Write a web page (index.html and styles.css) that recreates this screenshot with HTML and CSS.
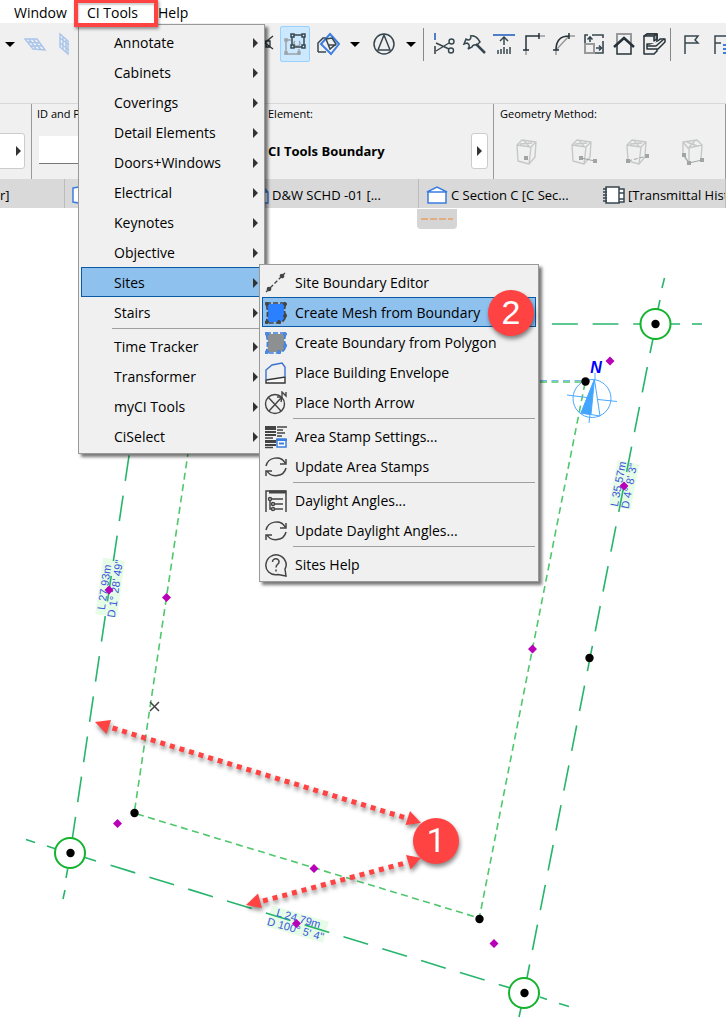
FILE: index.html
```html
<!DOCTYPE html>
<html lang="en">
<head>
<meta charset="utf-8">
<title>CI Tools – Sites</title>
<link rel="stylesheet" href="styles.css">
</head>
<body>
<svg class="defs" aria-hidden="true">
  <defs>
    <g id="cube" fill="none" stroke="#c6c8c8" stroke-width="1.4" stroke-linejoin="round">
      <path d="M2 6 16 8 14 25 3 22ZM2 6 7 1 21 3 16 8M21 3 20 18 14 25M5 5 17 4M9 2l5 5"/>
    </g>
    <g id="refresh" fill="none" stroke="#444" stroke-width="1.5">
      <path d="M2 11C4 2 17 0 21 8M22 4v5h-6M22 13C20 22 7 23 3 16M2 21v-5h6"/>
    </g>
  </defs>
</svg>
<div class="app">
  <nav class="menubar" aria-label="Main menu">
    <button class="menubar-item">Window</button>
    <button class="menubar-item current">CI Tools</button>
    <button class="menubar-item">Help</button>
  </nav>

  <div class="toolbar">
    <div class="tools tools-start">
      <button class="caret" aria-label="Options"></button>
      <button class="tool" aria-label="Plane"><svg width="24" height="20" viewBox="0 0 24 20" fill="none" stroke="#a9c4ea" stroke-width="1.4"><path d="M2 5 14 5 22 16 10 15ZM5 8 16 9M7 12 19 12M6 5l7 10M10 5l8 11"/></svg></button>
      <button class="tool" aria-label="Elevation"><svg width="14" height="24" viewBox="0 0 14 24" fill="none" stroke="#a9c4ea" stroke-width="1.4"><path d="M2 2 10 9 10 22 2 15ZM5 5v12M8 7v13M2 6l9 7M2 11l9 7"/></svg></button>
    </div>
    <div class="tools">
      <button class="tool" aria-label="Cut lines"><svg width="22" height="22" viewBox="0 0 22 22" fill="none" stroke="#263238" stroke-width="1.3"><path d="M3 4l16 12M3 16 19 3M12 8v6h4V8Z"/></svg></button>
      <button class="tool active" aria-label="Suspend groups"><svg width="22" height="22" viewBox="0 0 22 22" fill="none" stroke-width="1.5"><g stroke="#9aa3a8"><path d="M7 7H2v14h13v-5M11 8a3 3 0 1 0 4 0"/><path fill="#9aa3a8" d="M1 6h2v2H1ZM1 19h2v2H1ZM14 19h2v2h-2Z"/></g><g stroke="#37474f"><path d="M8 2h12v12H8Z"/><path fill="#cce8ff" d="M7 1h3v3H7ZM18 1h3v3h-3ZM7 12h3v3H7ZM18 12h3v3h-3Z"/></g></svg></button>
      <button class="tool" aria-label="Trim to roof"><svg width="24" height="24" viewBox="0 0 24 24" fill="none" stroke="#37474f" stroke-width="1.5"><path d="M2 20V11L7 6h5M2 20h8"/><path stroke="#3b7ee0" stroke-width="2" fill="#f0f0f0" d="M14 2 23 12 15 22 5 12Z"/><path d="M10 7 16 6 20 12 14 17ZM12 13h8"/></svg></button>
      <button class="caret" aria-label="Roof options"></button>
      <button class="tool" aria-label="Magic wand"><svg width="24" height="24" viewBox="0 0 24 24" fill="none" stroke="#37474f" stroke-width="1.5"><circle cx="12" cy="12" r="10"/><path d="M12 3 6 18H18Z"/></svg></button>
      <button class="caret" aria-label="Wand options"></button>
    </div>
    <div class="tools divided">
      <button class="tool" aria-label="Split"><svg width="22" height="24" viewBox="0 0 22 24" fill="none" stroke="#37474f" stroke-width="1.4"><path stroke="#4f7fc8" stroke-width="2" d="M2 1v7"/><path stroke="#666" stroke-width="2" d="M2 14v8"/><path d="M3 11 16 17M3 19 16 11"/><circle cx="18.500" cy="9.500" r="2.500"/><circle cx="18" cy="18.500" r="2.500"/></svg></button>
      <button class="tool" aria-label="Adjust"><svg width="24" height="24" viewBox="0 0 24 24" fill="none" stroke="#37474f" stroke-width="1.5"><path d="M8 4q5-1 8 3l2 3-3 3q-4-1-5 2l-4 2q3-4-1-6l-3 1 2-5 2 1q3 0 3-4Z"/><path stroke-width="2.500" d="M14 12 23 21"/></svg></button>
      <button class="tool" aria-label="Elevate"><svg width="22" height="24" viewBox="0 0 22 24" fill="none" stroke="#37474f" stroke-width="1.5"><path stroke="#4f7fc8" stroke-width="2" d="M0 3h22"/><path d="M11 13V5M7 9l4-4 4 4M5 18v4M8 17v5M11 15v7M14 17v5M17 15v7"/></svg></button>
      <button class="tool" aria-label="Intersect"><svg width="24" height="24" viewBox="0 0 24 24" fill="none" stroke="#263238" stroke-width="1.5"><path stroke="#999" d="M16 4h7M4 17v6"/><path d="M4 18V4H17M17 1v6M1 18h6"/></svg></button>
      <button class="tool" aria-label="Fillet"><svg width="24" height="24" viewBox="0 0 24 24" fill="none" stroke="#263238" stroke-width="1.5"><path stroke="#999" d="M16 4h7M4 17v6M4 18 17 4"/><path d="M4 18Q4 4 17 4M17 1v6M1 18h6"/></svg></button>
      <button class="tool" aria-label="Resize"><svg width="22" height="24" viewBox="0 0 22 24" fill="none" stroke="#37474f" stroke-width="1.6"><path d="M2 11V3h3M9 3H20V6M20 9V21H12"/><path stroke="#999" stroke-width="2" d="M2 12h9v9H2Z"/><path d="M7 10V5M4.500 7.500 7 5l2.500 2.500M13 16h5M16 13.500l2.500 2.500-2.500 2.500"/></svg></button>
      <button class="tool" aria-label="Roof trim"><svg width="22" height="24" viewBox="0 0 22 24" fill="none"><path stroke="#999" stroke-width="2" d="M4 11V2h14v9"/><path stroke="#263238" stroke-width="1.500" d="M4 13v9h14v-9"/><path stroke="#263238" stroke-width="2.500" d="M1 15 11 6l10 9"/></svg></button>
      <button class="tool" aria-label="Solid operations"><svg width="24" height="24" viewBox="0 0 24 24" fill="#f0f0f0" stroke="#263238" stroke-width="1.5" stroke-linejoin="round"><path d="M2 4v18h10l3-3V2H5Z"/><path fill="#9aa3a8" d="M2 4h10l3-2H5ZM12 4v5l3-2V2Z"/><path d="M5 12h8l5-5h5v3l-7 7H5Z"/><path d="M5 14h9l8-7"/></svg></button>
    </div>
    <div class="tools divided">
      <button class="tool" aria-label="Flag"><svg width="18" height="24" viewBox="0 0 18 24" fill="none" stroke="#37474f" stroke-width="1.5"><path d="M3 22V4H16l-3 4 3 3H3"/></svg></button>
      <button class="tool" aria-label="Flag list"><svg width="18" height="24" viewBox="0 0 18 24" fill="none" stroke="#37474f" stroke-width="1.5"><path d="M3 22V4H15M3 11h6"/><path stroke="#3b7ee0" stroke-width="2" d="M11 13h7M11 17h7M11 21h7"/></svg></button>
    </div>
  </div>

  <div class="infobox">
    <section class="info info-start"><button class="expand" aria-label="More"></button></section>
    <section class="info info-id">
      <label class="info-label" for="element-id">ID and Property:</label>
      <input id="element-id" type="text">
    </section>
    <section class="info info-element">
      <h2 class="info-label">Element:</h2>
      <div class="info-row"><strong>CI Tools Boundary</strong><button class="expand" aria-label="More"></button></div>
    </section>
    <section class="info info-geometry">
      <h2 class="info-label">Geometry Method:</h2>
      <div class="methods">
        <button class="method" aria-label="Point"><svg width="26" height="28" viewBox="0 0 26 28"><use href="#cube"/><path fill="#a0a4a5" d="M9 17h4v4H9Z"/></svg></button>
        <button class="method" aria-label="Two points"><svg width="28" height="28" viewBox="0 0 28 28"><use href="#cube"/><path stroke="#a0a4a5" d="M11 19 25 22"/><path fill="#a0a4a5" d="M9 17h4v4H9ZM23 20h4v4h-4Z"/></svg></button>
        <button class="method" aria-label="Diagonal"><svg width="26" height="28" viewBox="0 0 26 28"><use href="#cube"/><path stroke="#a0a4a5" stroke-dasharray="4 2" d="M3 22 22 17"/><path fill="#a0a4a5" d="M1 20h4v4H1ZM20 15h4v4h-4Z"/></svg></button>
        <button class="method" aria-label="Three points"><svg width="26" height="28" viewBox="0 0 26 28"><g fill="none" stroke="#c6c8c8" stroke-width="1.400" stroke-linejoin="round"><path d="M3 3 17 1 22 6 8 9ZM3 3v13l6 8V9M22 6l-1 14M7 3l10 4M15 2 9 8"/></g><path fill="none" stroke="#a0a4a5" d="M4 16 9 24 22 21"/><path fill="#a0a4a5" d="M2 14h4v4H2ZM7 22h4v4H7ZM20 19h4v4h-4Z"/></svg></button>
      </div>
    </section>
  </div>

  <div class="tabs" role="tablist">
    <button class="tab tab-start" role="tab">r]</button>
    <button class="tab" role="tab"><svg width="20" height="20" viewBox="0 0 20 20" fill="#fff" stroke="#3b7ee0" stroke-width="1.500"><path d="M1 3 7 2V18L1 17ZM7 2h12v16H7"/></svg></button>
    <button class="tab" role="tab"><svg width="20" height="20" viewBox="0 0 20 20" fill="#fff" stroke="#3b7ee0" stroke-width="1.500"><path d="M2 2h12l5 5v11H2ZM14 2v5h5"/></svg><span>D&amp;W SCHD -01 [...</span></button>
    <button class="tab tab-open" role="tab"><svg width="22" height="20" viewBox="0 0 22 20" fill="#fff" stroke="#3b7ee0" stroke-width="1.500"><path d="M2 7h18v11H2ZM1 7 11 2l10 5Z"/></svg><span>C Section C [C Sec...</span></button>
    <button class="tab" role="tab"><svg width="22" height="20" viewBox="0 0 22 20" fill="#fff" stroke="#37474f" stroke-width="1.500"><path d="M3 2h13v16H3ZM16 4h5v13h-5M16 8h5M16 14h5M0 4h4M0 7h4M0 10h4M0 13h4M0 16h4"/></svg><span>[Transmittal Hist</span></button>
  </div>

  <main class="canvas">
    <div class="handle"></div>
    <svg class="plan" viewBox="0 208 726 812">
      <g class="label-bg">
        <rect x="-28" y="-11" width="57" height="22" transform="translate(110 588) rotate(-82)"/>
        <rect x="-23" y="-11" width="46" height="22" transform="translate(624 485) rotate(-79)"/>
        <rect x="-29" y="-11" width="59" height="22" transform="translate(297 924) rotate(16)"/>
      </g>
      <g class="boundary">
        <path class="long" d="M135 415.200 72.400 838"/>
        <path class="long" d="M647.300 367 525 988"/>
        <path class="long" d="M110.600 865.300 512 988.500"/>
        <path class="long" d="M552 324H641"/>
        <path d="M67.700 869 66 878M65 890 63 899M85 857.500 96 861M47 846 56 849M26 839.500 35 842.500M664.500 278 662 288M660 300 658 309M653 339 650 353M671 324h9M692 324h10M540 997 547 999.500M559 1003.500 569 1006.500M521 1008 519 1017"/>
      </g>
      <path class="blue-dash" d="M540 380.500H583"/>
      <g class="setback">
        <path d="M540 382H583"/>
        <path d="M585 383 479.500 917"/>
        <path d="M137 814 479 918"/>
        <path d="M188.500 450 134.500 811"/>
      </g>
      <g class="dims">
        <g transform="translate(110 588) rotate(-82)"><text y="-2">L 27.93m</text><text y="9">D 1° 28' 49"</text></g>
        <g transform="translate(624 485) rotate(-79)"><text y="-2">L 35.57m</text><text y="9">D 4° 8' 3"</text></g>
        <g transform="translate(297 924) rotate(16)"><text y="-2">L 24.79m</text><text y="9">D 100° 5' 4"</text></g>
      </g>
      <g class="north">
        <circle cx="592" cy="398.500" r="19"/>
        <path d="M595 373V380M590 414 589 423M567 395 587 397.500M598 399.500 617 401.500M594.500 380 600 416 581 413Z"/>
        <path class="needle" d="M594.500 379 581 413 591 414.500Z"/>
        <text x="596" y="373">N</text>
      </g>
      <g class="stations"><circle cx="655.500" cy="324" r="15"/><circle cx="70" cy="853" r="15"/><circle cx="524" cy="993" r="15"/></g>
      <g class="nodes"><circle cx="655.500" cy="324" r="4.200"/><circle cx="70.500" cy="853" r="4.200"/><circle cx="524.500" cy="993" r="4.200"/><circle cx="585.500" cy="381.500" r="4.200"/><circle cx="589.500" cy="658" r="4.200"/><circle cx="134.500" cy="813" r="4.200"/><circle cx="479.500" cy="919" r="4.200"/></g>
      <path class="diamonds" d="M610 356.500l4.500 4.500-4.500 4.500-4.500-4.500ZM624 481.500l4.500 4.500-4.500 4.500-4.500-4.500ZM532.500 644.500l4.500 4.500-4.500 4.500-4.500-4.500ZM494 939l4.500 4.500-4.500 4.500-4.500-4.500ZM314 864l4.500 4.500-4.500 4.500-4.500-4.500ZM296.500 919l4.500 4.500-4.500 4.500-4.500-4.500ZM117.500 819l4.500 4.500-4.500 4.500-4.500-4.500ZM109 585.500l4.500 4.500-4.500 4.500-4.500-4.500ZM166.500 593l4.500 4.500-4.500 4.500-4.500-4.500Z"/>
      <path class="cursor" d="M150 702l9 9M159 702l-9 9"/>
      <g class="callout">
        <path class="dots" d="M112.500 728 406 818M263 901 407 862.500"/>
        <path class="heads" d="M95 722 111 720 106.500 734ZM421 823 410 811 405.500 825ZM246 905 258 893.500 262 908ZM421 858 406 855 410.500 869.500Z"/>
        <circle class="heads" cx="436" cy="841" r="23"/>
        <text x="436" y="852">1</text>
      </g>
    </svg>
  </main>

  <div class="menu main-menu" role="menu">
    <button class="item parent" role="menuitem">Annotate</button>
    <button class="item parent" role="menuitem">Cabinets</button>
    <button class="item parent" role="menuitem">Coverings</button>
    <button class="item parent" role="menuitem">Detail Elements</button>
    <button class="item parent" role="menuitem">Doors+Windows</button>
    <button class="item parent" role="menuitem">Electrical</button>
    <button class="item parent" role="menuitem">Keynotes</button>
    <button class="item parent" role="menuitem">Objective</button>
    <button class="item parent selected" role="menuitem">Sites</button>
    <button class="item parent" role="menuitem">Stairs</button>
    <hr>
    <button class="item parent" role="menuitem">Time Tracker</button>
    <button class="item parent" role="menuitem">Transformer</button>
    <button class="item parent" role="menuitem">myCI Tools</button>
    <button class="item parent" role="menuitem">CiSelect</button>
  </div>

  <div class="menu sub-menu" role="menu">
    <button class="item" role="menuitem"><svg width="24" height="24" viewBox="0 0 24 24" fill="#444" stroke="#444" stroke-width="1.300"><path stroke-dasharray="4 2" d="M2 21 21 2"/><circle cx="5" cy="18" r="1.700"/><circle cx="18" cy="5" r="1.700"/></svg><span>Site Boundary Editor</span></button>
    <button class="item selected" role="menuitem"><svg width="24" height="24" viewBox="0 0 24 24"><path fill="#2b80ff" d="M3 3H21Q19 11 21 14 21 20 16 21H3Q5 12 3 3Z"/><path fill="none" stroke="#444" stroke-width="1.700" stroke-dasharray="5 2" d="M2 2H22Q19 11 22 14 21 20 16 22H2Q5 12 2 2Z"/><g fill="#444" stroke="#444"><circle cx="3" cy="3" r="1.500"/><circle cx="21" cy="3" r="1.500"/><circle cx="3" cy="21" r="1.500"/><circle cx="21" cy="15" r="1.500"/><circle cx="15" cy="21" r="1.500"/></g></svg><span>Create Mesh from Boundary</span><span class="badge">2</span></button>
    <button class="item" role="menuitem"><svg width="24" height="24" viewBox="0 0 24 24"><path fill="#8c9091" d="M3 3H21Q19 11 21 14 21 20 16 21H3Q5 12 3 3Z"/><path fill="none" stroke="#3b7ee0" stroke-width="1.700" stroke-dasharray="5 2" d="M2 2H22Q19 11 22 14 21 20 16 22H2Q5 12 2 2Z"/><g fill="#5b94e8" stroke="#3b7ee0"><circle cx="3" cy="3" r="1.500"/><circle cx="21" cy="3" r="1.500"/><circle cx="3" cy="21" r="1.500"/><circle cx="21" cy="15" r="1.500"/><circle cx="15" cy="21" r="1.500"/></g></svg><span>Create Boundary from Polygon</span></button>
    <button class="item" role="menuitem"><svg width="24" height="24" viewBox="0 0 24 24" fill="#f8f8f8" stroke-width="1.400"><path stroke="#333" d="M2 19 21 16V22H2Z"/><path fill="none" stroke="#3b70d0" d="M2 19V9L8 4 18 2 21 6V16"/></svg><span>Place Building Envelope</span></button>
    <button class="item" role="menuitem"><svg width="24" height="24" viewBox="0 0 24 24" fill="none" stroke="#444" stroke-width="1.400"><circle cx="11" cy="13" r="9.500"/><path d="M4 6 17 20M5 20 17 7M13 6l5 0-1 5M18 5V1l4 4V1"/></svg><span>Place North Arrow</span></button>
    <hr>
    <button class="item" role="menuitem"><svg width="24" height="24" viewBox="0 0 24 24"><g stroke="#444" stroke-width="1.500"><path stroke-width="4" d="M1 3H12"/><path stroke-width="2" d="M1 7H12M1 10H12M1 20H12"/><path d="M1 13H9M1 22.500H9M13 2H23M13 5H19M13 8H21M13 11H18"/><path stroke-width="3" d="M1 16.500H12"/></g><path fill="#fff" stroke="#3b7ee0" stroke-width="1.500" d="M13 14H22V22H13Z"/><path stroke="#3b7ee0" stroke-width="2" d="M12 15H23M15 18.500h5"/></svg><span>Area Stamp Settings...</span></button>
    <button class="item" role="menuitem"><svg width="24" height="24" viewBox="0 0 24 24"><use href="#refresh"/></svg><span>Update Area Stamps</span></button>
    <hr>
    <button class="item" role="menuitem"><svg width="24" height="24" viewBox="0 0 24 24" fill="none" stroke="#444" stroke-width="1.500"><path d="M2 23V2H22V23"/><path stroke-width="3" d="M5 3H22"/><path d="M8 10h11M4 10h1M10 15h9M10 20h9M6 11v9h1"/><circle cx="6" cy="10" r="1.500"/><circle cx="9" cy="15" r="1.500"/><circle cx="9" cy="20" r="1.500"/></svg><span>Daylight Angles...</span></button>
    <button class="item" role="menuitem"><svg width="24" height="24" viewBox="0 0 24 24"><use href="#refresh"/></svg><span>Update Daylight Angles...</span></button>
    <hr>
    <button class="item" role="menuitem"><svg width="24" height="24" viewBox="0 0 24 24" fill="none" stroke="#444" stroke-width="1.500"><path d="M14 21.500C6 23 1 17 2 11 3 4 9 1 14 2 21 4 24 11 21 16L22 23ZM8.500 9C8.500 4.500 15.500 5 15 9 15 11.500 12 11 12 14.500M12 16.500v2"/></svg><span>Sites Help</span></button>
  </div>
</div>
</body>
</html>
```
FILE: styles.css
```css
* { box-sizing: border-box; }
body {
  margin: 0;
  background: #fff;
  color: #000;
  font: 14px/20px "Open Sans", "Noto Sans", sans-serif;
}
button {
  margin: 0;
  padding: 0;
  border: 0;
  background: none;
  color: inherit;
  font: inherit;
  text-align: left;
  white-space: nowrap;
}
svg { flex: none; }
.defs { position: absolute; width: 0; height: 0; }
.app { position: relative; min-height: 100vh; overflow: hidden; }

.menubar { display: flex; height: 23px; padding-left: 14px; gap: 20px; align-items: center; }
.menubar-item { padding-top: 3px; }
.menubar-item.current { position: relative; }
.menubar-item.current::after {
  content: "";
  position: absolute;
  z-index: 4;
  inset: -1px -20px -4px -13px;
  border: 4px solid #ff4343;
  box-shadow: 1px 2px 3px #0006, inset 1px 2px 2px #0003;
}

.toolbar { display: flex; height: 80px; padding-top: 3px; background: #f0f0f0; }
.tools { display: flex; flex: none; height: 36px; }
.tools-start { width: 250px; }
.tool { display: flex; flex: none; width: 30px; align-items: center; justify-content: center; }
.tool.active { border: 1px solid #99d1ff; border-radius: 2px; background: #cce8ff; }
.tool.active + .tool { margin-left: 3px; }
.caret { display: flex; flex: none; width: 22px; align-items: center; justify-content: center; }
.caret::after { content: ""; border: 5px solid transparent; border-top-color: #000; border-bottom: 0; }
.tool + .caret { margin-left: 1px; }
.caret + .tool { margin-left: 3px; }
.tools-start .caret { width: 20px; }
.tools-start .caret + .tool { margin: 0; }
.divided { margin-left: 1px; padding-left: 5px; }
.divided::before { content: ""; width: 1px; height: 33px; margin: 2px 0 0 -5px; background: #888; }
.divided .tool:first-child { margin-left: 5px; }

.infobox { display: flex; height: 76px; border-top: 1px solid #d8d8d8; background: #f0f0f0; }
.info { flex: none; border-right: 1px solid #999; }
.info-label { display: block; margin: 0; font-size: 11px; line-height: 20px; font-weight: 500; white-space: nowrap; }
.info-start { display: flex; width: 32px; padding-top: 29px; justify-content: flex-end; padding-right: 6px; }
.info-id { width: 220px; padding-left: 5px; overflow: hidden; }
.info-id input { width: 200px; height: 28px; margin: 12px 2px; border: 0; border-bottom: 1px solid #777; background: #fff; }
.info-element { width: 242px; padding: 0 5px 0 16px; }
.info-row { display: flex; margin-top: 9px; align-items: center; justify-content: space-between; font-size: 13px; }
.info-geometry { flex: 1; padding-left: 6px; }
.methods { display: flex; margin: 15px 0 0 15px; gap: 29px; }
.method { display: flex; width: 26px; }
.expand { display: flex; width: 17px; height: 36px; border: 1px solid #ccc; border-radius: 3px; background: #fff; align-items: center; justify-content: center; }
.info-start .expand { width: 30px; flex: none; justify-content: flex-end; padding-right: 3px; }
.expand::after { content: ""; border: 5px solid transparent; border-left-color: #333; border-right: 0; }

.tabs { display: flex; height: 29px; background: #d9d9d9; overflow: hidden; font-size: 13px; }
.tab { display: flex; flex: 0 0 177px; padding: 2px 0 0 7px; gap: 3px; align-items: center; border-right: 1px solid #bbb; overflow: hidden; }
.tab-start { flex-basis: 65px; padding-left: 0; }
.tab-open { border-color: transparent; }
.tab:last-child { flex: 1 0 0; }

.canvas { position: relative; }
.plan { display: block; width: 100%; }
.handle { position: absolute; top: 1px; left: calc(50% + 54px); display: flex; width: 40px; height: 20px; padding: 0 4px; align-items: center; border-radius: 0 0 4px 4px; background: #d5d5d5; }
.handle::after { content: ""; flex: 1; height: 2px; background: repeating-linear-gradient(90deg, #e3ad82 0 7px, transparent 7px 9px); }

.label-bg { fill: #e6fce6; }
.boundary { fill: none; stroke: #27b56c; stroke-width: 1.6; }
.long { stroke-dasharray: 25.8 14.8; }
.setback { fill: none; stroke: #4fc76c; stroke-width: 1.6; stroke-dasharray: 7 4.5; }
.blue-dash { stroke: #7db8f5; stroke-width: 1; stroke-dasharray: 7 4.5; }
.dims { fill: #3a55dc; font: 11px "Liberation Sans", Arial, sans-serif; text-anchor: middle; }
.north { fill: none; stroke: #4aa8ff; stroke-width: 1; }
.north .needle { fill: #42a5ff; }
.north text { fill: #00f; stroke: none; font: italic bold 16px "Liberation Sans", Arial, sans-serif; text-anchor: middle; }
.stations { fill: #fff; stroke: #14b32d; stroke-width: 2; }
.diamonds { fill: #b800b8; }
.cursor { stroke: #444; stroke-width: 1.5; }
.callout { filter: drop-shadow(1px 3px 2px #0007); }
.dots { fill: none; stroke: #ff4343; stroke-width: 5; stroke-dasharray: 5 5; }
.heads { fill: #ff4343; }
.callout text { fill: #fff; font: 34px Roboto, Arial, sans-serif; text-anchor: middle; }

.menu { position: absolute; padding: 2px; border: 1px solid #999; background: #f0f0f0; box-shadow: 3px 3px 3px #0008; }
.main-menu { z-index: 2; top: 24px; left: 78px; width: 187px; }
.sub-menu { z-index: 3; top: 264px; left: 259px; width: 280px; }
.item { position: relative; display: flex; width: 100%; height: 30px; padding-top: 2px; align-items: center; border: 1px solid transparent; }
.item.selected { border-color: #0a5aa5; background: #8fc1ee; }
.main-menu .item { padding-left: 32px; }
.sub-menu .item { padding-left: 1px; gap: 7px; }
.parent::after { content: ""; margin: 0 3px 0 auto; border: 5px solid transparent; border-left-color: #333; border-right: 0; }
.menu hr { height: 1px; margin: 1px 1px 2px 31px; border: 0; background: #a0a0a0; }
.badge { position: absolute; top: -8px; right: 1px; width: 46px; height: 46px; border-radius: 50%; background: #ff4343; color: #fff; font: 34px/44px "Liberation Sans", Arial, sans-serif; text-align: center; box-shadow: 1px 3px 4px #0007; }
```
